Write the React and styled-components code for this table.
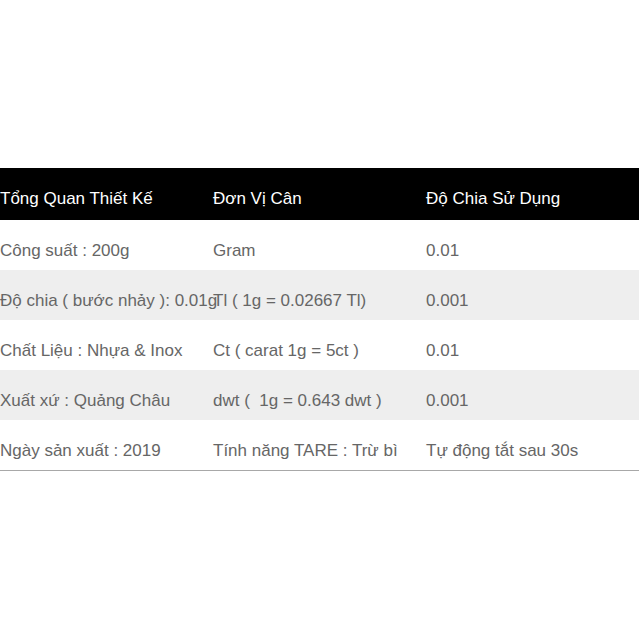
import React from "react";
import styled, { createGlobalStyle } from "styled-components";

const Global = createGlobalStyle`
  html, body { margin: 0; padding: 0; background: #fff; }
  body { font-family: "Liberation Sans", Arial, sans-serif; }
`;

const Page = styled.div`
  width: 640px;
  height: 640px;
  padding-top: 168px;
  box-sizing: border-box;
`;

const Table = styled.div`
  width: 639px;
  display: flex;
  flex-direction: column;
  border-bottom: 1px solid #a8a8a8;
`;

const Row = styled.div`
  display: grid;
  grid-template-columns: 213px 213px 213px;
  height: ${(p) => (p.$head ? 52 : 50)}px;
  align-items: center;
  background: ${(p) => (p.$head ? "#000" : p.$alt ? "#eeeeee" : "#fff")};
  color: ${(p) => (p.$head ? "#fff" : "#666")};
`;

const Cell = styled.div`
  font-size: 17px;
  line-height: 20px;
  white-space: pre;
  overflow: visible;
  padding-top: ${(p) => (p.$head ? 10 : 12)}px;
`;

const head = ["Tổng Quan Thiết Kế", "Đơn Vị Cân", "Độ Chia Sử Dụng"];
const rows = [
  ["Công suất : 200g", "Gram", "0.01"],
  ["Độ chia ( bước nhảy ): 0.01g", "Tl ( 1g = 0.02667 Tl)", "0.001"],
  ["Chất Liệu : Nhựa & Inox", "Ct ( carat 1g = 5ct )", "0.01"],
  ["Xuất xứ : Quảng Châu", "dwt (  1g = 0.643 dwt )", "0.001"],
  ["Ngày sản xuất : 2019", "Tính năng TARE : Trừ bì", "Tự động tắt sau 30s"],
];

export default function App() {
  return (
    <>
      <Global />
      <Page>
        <Table>
          <Row $head>
            {head.map((h) => (
              <Cell $head key={h}>{h}</Cell>
            ))}
          </Row>
          {rows.map((r, i) => (
            <Row key={i} $alt={i % 2 === 1}>
              {r.map((c, j) => (
                <Cell key={j}>{c}</Cell>
              ))}
            </Row>
          ))}
        </Table>
      </Page>
    </>
  );
}
